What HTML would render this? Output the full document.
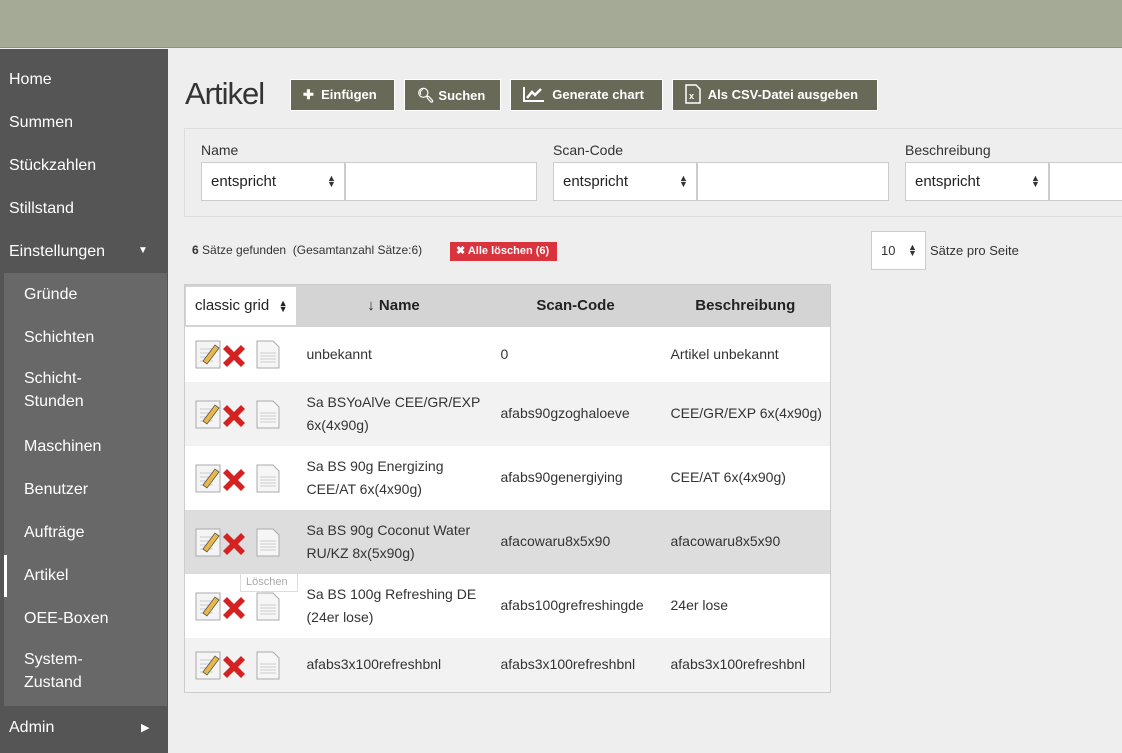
<!DOCTYPE html>
<html><head><meta charset="utf-8"><style>
*{box-sizing:border-box;margin:0;padding:0}
body{width:1122px;height:753px;overflow:hidden;background:#eee;font-family:"Liberation Sans",sans-serif;position:relative;color:#333}
.top{position:absolute;left:0;top:0;width:1122px;height:48px;background:#a5aa96;border-bottom:1px solid #8d927e}
.side{position:absolute;left:0;top:49px;width:168px;height:704px;background:#555}
.side .it{position:absolute;left:9px;color:#fff;font-size:16px}
.sub{position:absolute;left:4px;top:224px;width:163px;height:433px;background:#686868}
.sub .it{left:20px}
.ab{position:absolute;font-size:13px;color:#fff}
h1{position:absolute;left:185px;top:76px;font-weight:normal;font-size:31px;color:#333;letter-spacing:-1px}
.btn{position:absolute;top:79px;height:32px;background:#686a57;border:1px solid #fff;color:#fff;font-size:13px;font-weight:bold;line-height:30px;padding-left:12px}
.filt{position:absolute;left:184px;top:128px;width:940px;height:89px;border:1px solid #ddd;background:#eee}
.lbl{position:absolute;top:142px;font-size:14px;color:#333}
.sel{position:absolute;top:162px;height:39px;background:#fff;border:1px solid #ccc;font-size:15px;line-height:37px;padding-left:9px;color:#222}
.inp{position:absolute;top:162px;height:39px;background:#fff;border:1px solid #ccc}
table{position:absolute;left:184px;top:284px;width:647px;border-collapse:collapse;border:1px solid #ccc;font-size:14px}
th{background:#d4d4d4;height:42px;font-size:15px;color:#222}
td{color:#333;padding-left:10px;line-height:23px}
tr.s td{background:#f2f2f2}
tr.h td{background:#ddd}
tr.w td{background:#fff}
.ic{display:inline-block;vertical-align:middle}
</style></head><body>
<div class="top"></div>
<div class="side">
<div class="it" style="top:22px">Home</div>
<div class="it" style="top:65px">Summen</div>
<div class="it" style="top:108px">Stückzahlen</div>
<div class="it" style="top:151px">Stillstand</div>
<div class="it" style="top:194px">Einstellungen</div>
<div class="ab" style="left:138px;top:196px;font-size:10px">▼</div>
<div class="sub">
<div class="it" style="top:13px">Gründe</div>
<div class="it" style="top:56px">Schichten</div>
<div class="it" style="line-height:23px;top:94px">Schicht-<br>Stunden</div>
<div class="it" style="top:165px">Maschinen</div>
<div class="it" style="top:208px">Benutzer</div>
<div class="it" style="top:251px">Aufträge</div>
<div style="position:absolute;left:0;top:282px;width:3px;height:42px;background:#fff"></div>
<div class="it" style="top:294px">Artikel</div>
<div class="it" style="top:337px">OEE-Boxen</div>
<div class="it" style="top:375px;line-height:23px">System-<br>Zustand</div>
</div>
<div class="it" style="top:670px">Admin</div>
<div class="ab" style="left:141px;top:672px;font-size:11px">▶</div>
</div>
<h1>Artikel</h1>
<div class="btn" style="left:290px;width:105px">✚&nbsp; Einfügen</div>
<div class="btn" style="left:404px;width:97px"><span style="font-size:14px">&#x1F50D;&#xFE0E;</span>&nbsp;Suchen</div>
<div class="btn" style="left:510px;width:153px"><svg width="22" height="16" viewBox="0 0 22 16" style="vertical-align:-3px"><path d="M1 1V15H21" stroke="#fff" stroke-width="2" fill="none"/><path d="M4 12L9 6L12 9L18 3" stroke="#fff" stroke-width="2.5" fill="none"/></svg>&nbsp; Generate chart</div>
<div class="btn" style="left:672px;width:206px"><svg width="16" height="20" viewBox="0 0 16 20" style="vertical-align:-5px"><path d="M1 1H11L15 5V19H1Z" stroke="#fff" stroke-width="1.5" fill="none"/><text x="4" y="15" fill="#fff" font-size="9" font-family="Liberation Sans">x</text></svg>&nbsp; Als CSV-Datei ausgeben</div>
<div class="filt"></div>
<div class="lbl" style="left:201px">Name</div>
<div class="lbl" style="left:553px">Scan-Code</div>
<div class="lbl" style="left:905px">Beschreibung</div>
<div class="sel" style="left:201px;width:144px">entspricht</div>
<div class="inp" style="left:345px;width:192px"></div>
<div class="sel" style="left:553px;width:144px">entspricht</div>
<div class="inp" style="left:697px;width:192px"></div>
<div class="sel" style="left:905px;width:144px">entspricht</div>
<div class="inp" style="left:1049px;width:80px"></div>
<div style="position:absolute;left:327px;top:175px;font-size:9px;line-height:6px">▲<br>▼</div>
<div style="position:absolute;left:679px;top:175px;font-size:9px;line-height:6px">▲<br>▼</div>
<div style="position:absolute;left:1031px;top:175px;font-size:9px;line-height:6px">▲<br>▼</div>
<div style="position:absolute;left:192px;top:243px;font-size:12px;color:#333"><b>6</b> Sätze gefunden &nbsp;(Gesamtanzahl Sätze:6)</div>
<div style="position:absolute;left:450px;top:242px;width:107px;height:19px;background:#d9343e;color:#fff;font-size:11px;font-weight:bold;line-height:19px;padding-left:6px">✖ Alle löschen (6)</div>
<div style="position:absolute;left:871px;top:231px;width:55px;height:39px;background:#fff;border:1px solid #ccc;font-size:13px;line-height:37px;padding-left:9px">10</div>
<div style="position:absolute;left:908px;top:244px;font-size:9px;line-height:6px">▲<br>▼</div>
<div style="position:absolute;left:930px;top:243px;font-size:13px">Sätze pro Seite</div>
<table>
<tr><th style="width:112px;background:#d4d4d4;padding:0"><div style="background:#fff;margin:1px;height:38px;line-height:38px;font-weight:normal;font-size:15px;text-align:left;padding-left:9px;position:relative">classic grid<span style="position:absolute;right:8px;top:13px;font-size:9px;line-height:6px">▲<br>▼</span></div></th><th style="width:194px">↓ Name</th><th style="width:170px">Scan-Code</th><th>Beschreibung</th></tr>
<tr class="w" style="height:55px"><td>ICONS</td><td>unbekannt</td><td>0</td><td>Artikel unbekannt</td></tr>
<tr class="s" style="height:64px"><td>ICONS</td><td>Sa BSYoAlVe CEE/GR/EXP 6x(4x90g)</td><td>afabs90gzoghaloeve</td><td>CEE/GR/EXP 6x(4x90g)</td></tr>
<tr class="w" style="height:64px"><td>ICONS</td><td>Sa BS 90g Energizing CEE/AT 6x(4x90g)</td><td>afabs90genergiying</td><td>CEE/AT 6x(4x90g)</td></tr>
<tr class="h" style="height:64px"><td>ICONS</td><td>Sa BS 90g Coconut Water RU/KZ 8x(5x90g)</td><td>afacowaru8x5x90</td><td>afacowaru8x5x90</td></tr>
<tr class="w" style="height:64px"><td>ICONS</td><td>Sa BS 100g Refreshing DE (24er lose)</td><td>afabs100grefreshingde</td><td>24er lose</td></tr>
<tr class="s" style="height:55px"><td>ICONS</td><td>afabs3x100refreshbnl</td><td>afabs3x100refreshbnl</td><td>afabs3x100refreshbnl</td></tr>
</table>
<div style="position:absolute;left:240px;top:573px;width:58px;height:19px;background:#fff;border:1px solid #ddd;font-size:11px;color:#aaa;line-height:17px;padding-left:5px">Löschen</div>
<script>
var ic='<svg class="ic" width="90" height="30" viewBox="0 0 90 30"><rect x="1" y="2" width="24" height="27" fill="#f4f4f4" stroke="#aaa"/><path d="M5 10h13M5 14h13M5 18h13M5 22h13" stroke="#ccc"/><path d="M8 22L20 6L24 9L12 25Z" fill="#e8b84a" stroke="#555" stroke-width="0.8"/><path d="M32 6L39 13L46 6L50 10L43 17L50 24L46 28L39 21L32 28L28 24L35 17L28 10Z" fill="#d42222"/><path d="M62 2H78L84 8V29H62Z" fill="#f6f6f6" stroke="#aaa"/><path d="M65 14h16M65 17h16M65 20h16M65 23h16" stroke="#ccc"/></svg>';
document.querySelectorAll('td').forEach(function(t){if(t.textContent=='ICONS'){t.innerHTML=ic;t.style.paddingLeft='10px';}});
</script>
</body></html>
